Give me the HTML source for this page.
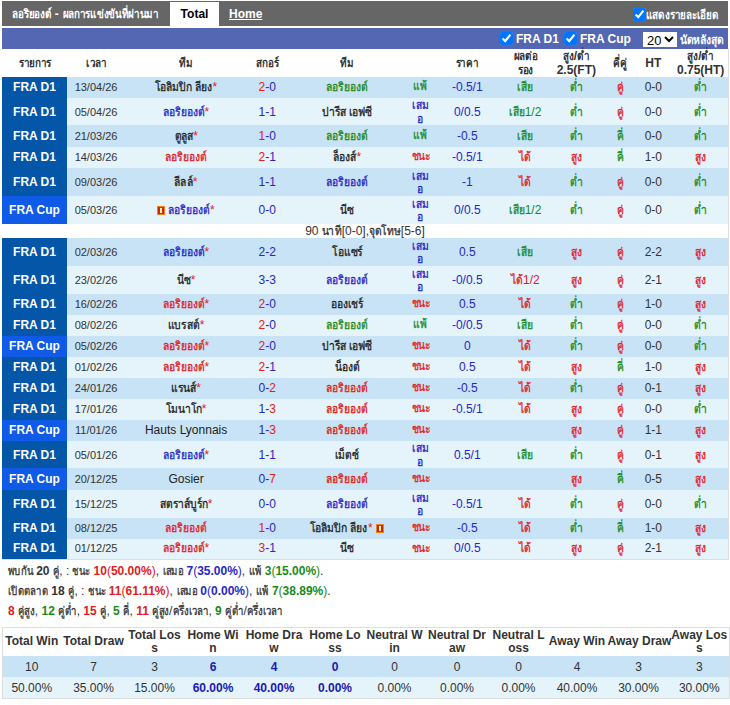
<!DOCTYPE html>
<html><head><meta charset="utf-8">
<style>
*{box-sizing:border-box}
html,body{margin:0;padding:0;background:#fff;width:730px;height:705px;overflow:hidden}
body{font-family:"Liberation Sans",sans-serif;font-size:12px;color:#333;position:relative}
#top{position:absolute;left:2px;top:1px;width:726px;height:25px;background:#666}
#top .ttl{position:absolute;left:10px;top:3px;color:#fff;font-weight:bold;font-size:12px}
#top .tab{position:absolute;left:168px;top:1px;width:49px;height:24px;background:#fff;color:#000;font-weight:bold;font-size:12px;text-align:center;line-height:24px}
#top .home{position:absolute;left:227px;top:6px;color:#fff;font-weight:bold;font-size:12px;text-decoration:underline}
#top .det{position:absolute;left:631px;top:3.5px;color:#fff;font-weight:bold;font-size:12px;white-space:nowrap}
input[type=checkbox]{margin:0 3px 0 0;width:13px;height:13px;vertical-align:-2px}
#bar{position:absolute;left:2px;top:28px;width:726px;height:21px;background:#5467b2}
#bar .f{position:absolute;top:4px;color:#fff;font-weight:bold;font-size:12px;white-space:nowrap}
#bar .sel{position:absolute;left:641px;top:4px;width:34px;height:15px;font-size:13px;padding:0;margin:0;border:0;border-radius:0;background:#fff;color:#000}
#main{position:absolute;left:2px;top:49px;width:727px;border-collapse:collapse;table-layout:fixed;border-right:1px solid #ddd;border-bottom:1px solid #ddd}
#main td{padding:0;text-align:center;vertical-align:middle;white-space:nowrap;line-height:14px}
#main th{font-weight:bold;color:#333;height:28px;padding:0;line-height:14px}
#main tr.a td{background:#c8e3f5}
#main tr.b td{background:#e5f3fb}
#main td.d1{background:#0457a8 !important;color:#fff;font-weight:bold;font-size:12px}
#main td.cup{background:#0f5ae6 !important;color:#fff;font-weight:bold;font-size:12px}
#main td.dt{font-size:11px;color:#333;padding-left:4px}
#main tr.sub td{background:#fff;text-align:center;color:#333}
#main td.rs{line-height:13.5px}
#main tr.s1 td{padding-bottom:1px}
sup{color:#e02020;font-size:12px;vertical-align:baseline;line-height:0}
.rc{display:inline-block;width:8px;height:9px;background:linear-gradient(90deg,#c82000,#e03000 50%,#c82000);border:1px solid #f08020;vertical-align:-1px;position:relative}
.rc:after{content:"";position:absolute;left:2px;top:1px;width:2px;height:5px;background:#fff8c0}
.t{display:inline-block;transform:scaleX(.86);-webkit-text-stroke:0.3px currentColor}
th .t,#top .t,#bar .t{transform:scaleX(.82);-webkit-text-stroke:0}
#sum .l{position:absolute;left:8px;color:#333;font-size:12px;white-space:nowrap;line-height:14px;word-spacing:0px}
#sum .r{color:#e02020}#sum .u{color:#2727c8}#sum .g{color:#1a8a1a}
#st{position:absolute;left:2px;top:627px;width:727px;border-collapse:collapse;table-layout:fixed;border:1px solid #ddd}
#st td{text-align:center;padding:0;font-size:12px;color:#333;line-height:13px;white-space:nowrap}
#st tr.h td{font-weight:bold;height:28px;background:#fff;color:#333}
#st tr.a td{background:#c8e3f5;height:21px;padding-top:2px}
#st tr.b td{background:#e5f3fb;height:22px;padding-top:2px}
#st td.hb{color:#1a1ab4;font-weight:bold}
#bar .nl .t{transform:scaleX(.86)}
#sum .t{transform:scaleX(.8)}
</style></head><body>
<div id="top">
 <div class="ttl"><span class="t" style="margin:0 -4.32px">ลอริยองต์</span> - <span class="t" style="margin:0 -10.53px">ผลการแข่งขันที่ผ่านมา</span></div>
 <div class="tab">Total</div>
 <div class="home">Home</div>
 <div class="det"><input type="checkbox" checked style="margin-right:0"><span class="t" style="margin:0 -7.92px">แสดงรายละเอียด</span></div>
</div>
<div id="bar">
 <div class="f" style="left:498px"><input type="checkbox" checked>FRA D1</div>
 <div class="f" style="left:562px"><input type="checkbox" checked>FRA Cup</div>
 <select class="sel"><option>20</option></select>
 <div class="f nl" style="left:678px;top:2px"><span class="t" style="margin:0 -3.64px">นัดหลังสุด</span></div>
</div>
<table id="main">
<colgroup><col style="width:65px"><col style="width:54px"><col style="width:130px"><col style="width:32px"><col style="width:128px"><col style="width:18px"><col style="width:76px"><col style="width:40px"><col style="width:62px"><col style="width:26px"><col style="width:40px"><col style="width:55px"></colgroup>
<tr><th><span class="t" style="margin:0 -3.60px">รายการ</span></th><th style="padding-left:5px"><span class="t" style="margin:0 -2.25px">เวลา</span></th><th><span class="t" style="margin:0 -1.44px">ทีม</span></th><th><span class="t" style="margin:0 -2.43px">สกอร์</span></th><th><span class="t" style="margin:0 -1.44px">ทีม</span></th><th></th><th><span class="t" style="margin:0 -2.52px">ราคา</span></th><th><span class="t" style="margin:0 -2.61px">ผลต่อ</span><br><span class="t" style="margin:0 -1.71px">รอง</span></th><th><span class="t" style="margin:0 -1.17px">สูง</span>/<span class="t" style="margin:0 -1.35px">ต่ำ</span><br>2.5(FT)</th><th><span class="t" style="margin:0 -1.44px">คี่คู่</span></th><th>HT</th><th><span class="t" style="margin:0 -1.17px">สูง</span>/<span class="t" style="margin:0 -1.35px">ต่ำ</span><br>0.75(HT)</th></tr>
<tr class="a s1" style="height:21px"><td class="d1">FRA D1</td><td class="dt">13/04/26</td><td><span style="color:#222"><span class="t" style="margin:0 -3.01px">โอลิมปิก</span> <span class="t" style="margin:0 -1.40px">ลียง</span></span><sup>*</sup></td><td><span style="color:#e02020">2</span><span style="color:#2727c8">-</span><span style="color:#2727c8">0</span></td><td><span style="color:#1a8a1a"><span class="t" style="margin:0 -3.36px">ลอริยองต์</span></span></td><td class="rs"><span style="color:#1a8a1a"><span class="t" style="margin:0 -1.12px">แพ้</span></span></td><td style="color:#2727c8">-0.5/1</td><td style="color:#1a8a1a"><span class="t" style="margin:0 -1.26px">เสีย</span></td><td style="color:#1a8a1a"><span class="t" style="margin:0 -1.05px">ต่ำ</span></td><td style="color:#e02020"><span class="t" style="margin:0 -0.56px">คู่</span></td><td class="ht">0-0</td><td style="color:#1a8a1a"><span class="t" style="margin:0 -1.05px">ต่ำ</span></td></tr>
<tr class="b" style="height:27px"><td class="d1">FRA D1</td><td class="dt">05/04/26</td><td><span style="color:#2727c8"><span class="t" style="margin:0 -3.36px">ลอริยองต์</span></span><sup>*</sup></td><td><span style="color:#2727c8">1</span><span style="color:#2727c8">-</span><span style="color:#2727c8">1</span></td><td><span style="color:#222"><span class="t" style="margin:0 -1.96px">ปารีส</span> <span class="t" style="margin:0 -1.89px">เอฟซี</span></span></td><td class="rs"><span style="color:#2727c8;position:relative;top:1px;display:inline-block"><span class="t" style="margin:0 -1.33px">เสม</span><br><span class="t" style="margin:0 -0.49px">อ</span></span></td><td style="color:#2727c8">0/0.5</td><td style="color:#1a8a1a"><span class="t" style="margin:0 -1.26px">เสีย</span>1/2</td><td style="color:#1a8a1a"><span class="t" style="margin:0 -1.05px">ต่ำ</span></td><td style="color:#e02020"><span class="t" style="margin:0 -0.56px">คู่</span></td><td class="ht">0-0</td><td style="color:#1a8a1a"><span class="t" style="margin:0 -1.05px">ต่ำ</span></td></tr>
<tr class="a s1" style="height:22px"><td class="d1">FRA D1</td><td class="dt">21/03/26</td><td><span style="color:#222"><span class="t" style="margin:0 -1.54px">ตูลูส</span></span><sup>*</sup></td><td><span style="color:#e02020">1</span><span style="color:#2727c8">-</span><span style="color:#2727c8">0</span></td><td><span style="color:#1a8a1a"><span class="t" style="margin:0 -3.36px">ลอริยองต์</span></span></td><td class="rs"><span style="color:#1a8a1a"><span class="t" style="margin:0 -1.12px">แพ้</span></span></td><td style="color:#2727c8">-0.5</td><td style="color:#1a8a1a"><span class="t" style="margin:0 -1.26px">เสีย</span></td><td style="color:#1a8a1a"><span class="t" style="margin:0 -1.05px">ต่ำ</span></td><td style="color:#1a8a1a"><span class="t" style="margin:0 -0.56px">คี่</span></td><td class="ht">0-0</td><td style="color:#1a8a1a"><span class="t" style="margin:0 -1.05px">ต่ำ</span></td></tr>
<tr class="b s1" style="height:21px"><td class="d1">FRA D1</td><td class="dt">14/03/26</td><td><span style="color:#e02020"><span class="t" style="margin:0 -3.36px">ลอริยองต์</span></span></td><td><span style="color:#e02020">2</span><span style="color:#2727c8">-</span><span style="color:#2727c8">1</span></td><td><span style="color:#222"><span class="t" style="margin:0 -1.89px">ล็องส์</span></span><sup>*</sup></td><td class="rs"><span style="color:#e02020"><span class="t" style="margin:0 -1.54px">ชนะ</span></span></td><td style="color:#2727c8">-0.5/1</td><td style="color:#e02020"><span class="t" style="margin:0 -0.98px">ได้</span></td><td style="color:#e02020"><span class="t" style="margin:0 -0.91px">สูง</span></td><td style="color:#1a8a1a"><span class="t" style="margin:0 -0.56px">คี่</span></td><td class="ht">1-0</td><td style="color:#e02020"><span class="t" style="margin:0 -0.91px">สูง</span></td></tr>
<tr class="a" style="height:28px"><td class="d1">FRA D1</td><td class="dt">09/03/26</td><td><span style="color:#222"><span class="t" style="margin:0 -1.47px">ลีลล์</span></span><sup>*</sup></td><td><span style="color:#2727c8">1</span><span style="color:#2727c8">-</span><span style="color:#2727c8">1</span></td><td><span style="color:#2727c8"><span class="t" style="margin:0 -3.36px">ลอริยองต์</span></span></td><td class="rs"><span style="color:#2727c8;position:relative;top:1px;display:inline-block"><span class="t" style="margin:0 -1.33px">เสม</span><br><span class="t" style="margin:0 -0.49px">อ</span></span></td><td style="color:#2727c8">-1</td><td style="color:#e02020"><span class="t" style="margin:0 -0.98px">ได้</span></td><td style="color:#1a8a1a"><span class="t" style="margin:0 -1.05px">ต่ำ</span></td><td style="color:#e02020"><span class="t" style="margin:0 -0.56px">คู่</span></td><td class="ht">0-0</td><td style="color:#1a8a1a"><span class="t" style="margin:0 -1.05px">ต่ำ</span></td></tr>
<tr class="b" style="height:28px"><td class="cup">FRA Cup</td><td class="dt">05/03/26</td><td><i class="rc"></i> <span style="color:#2727c8"><span class="t" style="margin:0 -3.36px">ลอริยองต์</span></span><sup>*</sup></td><td><span style="color:#2727c8">0</span><span style="color:#2727c8">-</span><span style="color:#2727c8">0</span></td><td><span style="color:#222"><span class="t" style="margin:0 -1.12px">นีซ</span></span></td><td class="rs"><span style="color:#2727c8;position:relative;top:1px;display:inline-block"><span class="t" style="margin:0 -1.33px">เสม</span><br><span class="t" style="margin:0 -0.49px">อ</span></span></td><td style="color:#2727c8">0/0.5</td><td style="color:#1a8a1a"><span class="t" style="margin:0 -1.26px">เสีย</span>1/2</td><td style="color:#1a8a1a"><span class="t" style="margin:0 -1.05px">ต่ำ</span></td><td style="color:#e02020"><span class="t" style="margin:0 -0.56px">คู่</span></td><td class="ht">0-0</td><td style="color:#1a8a1a"><span class="t" style="margin:0 -1.05px">ต่ำ</span></td></tr>
<tr class="sub" style="height:14px"><td colspan="12">90 <span class="t" style="margin:0 -1.61px">นาที</span>[0-0],<span class="t" style="margin:0 -2.59px">จุดโทษ</span>[5-6]</td></tr>
<tr class="a" style="height:28px"><td class="d1">FRA D1</td><td class="dt">02/03/26</td><td><span style="color:#2727c8"><span class="t" style="margin:0 -3.36px">ลอริยองต์</span></span><sup>*</sup></td><td><span style="color:#2727c8">2</span><span style="color:#2727c8">-</span><span style="color:#2727c8">2</span></td><td><span style="color:#222"><span class="t" style="margin:0 -2.45px">โอแซร์</span></span></td><td class="rs"><span style="color:#2727c8;position:relative;top:1px;display:inline-block"><span class="t" style="margin:0 -1.33px">เสม</span><br><span class="t" style="margin:0 -0.49px">อ</span></span></td><td style="color:#2727c8">0.5</td><td style="color:#1a8a1a"><span class="t" style="margin:0 -1.26px">เสีย</span></td><td style="color:#e02020"><span class="t" style="margin:0 -0.91px">สูง</span></td><td style="color:#e02020"><span class="t" style="margin:0 -0.56px">คู่</span></td><td class="ht">2-2</td><td style="color:#e02020"><span class="t" style="margin:0 -0.91px">สูง</span></td></tr>
<tr class="b" style="height:28px"><td class="d1">FRA D1</td><td class="dt">23/02/26</td><td><span style="color:#222"><span class="t" style="margin:0 -1.12px">นีซ</span></span><sup>*</sup></td><td><span style="color:#2727c8">3</span><span style="color:#2727c8">-</span><span style="color:#2727c8">3</span></td><td><span style="color:#2727c8"><span class="t" style="margin:0 -3.36px">ลอริยองต์</span></span></td><td class="rs"><span style="color:#2727c8;position:relative;top:1px;display:inline-block"><span class="t" style="margin:0 -1.33px">เสม</span><br><span class="t" style="margin:0 -0.49px">อ</span></span></td><td style="color:#2727c8">-0/0.5</td><td style="color:#e02020"><span class="t" style="margin:0 -0.98px">ได้</span>1/2</td><td style="color:#e02020"><span class="t" style="margin:0 -0.91px">สูง</span></td><td style="color:#e02020"><span class="t" style="margin:0 -0.56px">คู่</span></td><td class="ht">2-1</td><td style="color:#e02020"><span class="t" style="margin:0 -0.91px">สูง</span></td></tr>
<tr class="a s1" style="height:21px"><td class="d1">FRA D1</td><td class="dt">16/02/26</td><td><span style="color:#e02020"><span class="t" style="margin:0 -3.36px">ลอริยองต์</span></span><sup>*</sup></td><td><span style="color:#e02020">2</span><span style="color:#2727c8">-</span><span style="color:#2727c8">0</span></td><td><span style="color:#222"><span class="t" style="margin:0 -2.66px">อองเชร์</span></span></td><td class="rs"><span style="color:#e02020"><span class="t" style="margin:0 -1.54px">ชนะ</span></span></td><td style="color:#2727c8">0.5</td><td style="color:#e02020"><span class="t" style="margin:0 -0.98px">ได้</span></td><td style="color:#1a8a1a"><span class="t" style="margin:0 -1.05px">ต่ำ</span></td><td style="color:#e02020"><span class="t" style="margin:0 -0.56px">คู่</span></td><td class="ht">1-0</td><td style="color:#e02020"><span class="t" style="margin:0 -0.91px">สูง</span></td></tr>
<tr class="b s1" style="height:21px"><td class="d1">FRA D1</td><td class="dt">08/02/26</td><td><span style="color:#222"><span class="t" style="margin:0 -2.59px">แบรสต์</span></span><sup>*</sup></td><td><span style="color:#e02020">2</span><span style="color:#2727c8">-</span><span style="color:#2727c8">0</span></td><td><span style="color:#1a8a1a"><span class="t" style="margin:0 -3.36px">ลอริยองต์</span></span></td><td class="rs"><span style="color:#1a8a1a"><span class="t" style="margin:0 -1.12px">แพ้</span></span></td><td style="color:#2727c8">-0/0.5</td><td style="color:#1a8a1a"><span class="t" style="margin:0 -1.26px">เสีย</span></td><td style="color:#1a8a1a"><span class="t" style="margin:0 -1.05px">ต่ำ</span></td><td style="color:#e02020"><span class="t" style="margin:0 -0.56px">คู่</span></td><td class="ht">0-0</td><td style="color:#1a8a1a"><span class="t" style="margin:0 -1.05px">ต่ำ</span></td></tr>
<tr class="a s1" style="height:21px"><td class="cup">FRA Cup</td><td class="dt">05/02/26</td><td><span style="color:#e02020"><span class="t" style="margin:0 -3.36px">ลอริยองต์</span></span><sup>*</sup></td><td><span style="color:#e02020">2</span><span style="color:#2727c8">-</span><span style="color:#2727c8">0</span></td><td><span style="color:#222"><span class="t" style="margin:0 -1.96px">ปารีส</span> <span class="t" style="margin:0 -1.89px">เอฟซี</span></span></td><td class="rs"><span style="color:#e02020"><span class="t" style="margin:0 -1.54px">ชนะ</span></span></td><td style="color:#2727c8">0</td><td style="color:#e02020"><span class="t" style="margin:0 -0.98px">ได้</span></td><td style="color:#1a8a1a"><span class="t" style="margin:0 -1.05px">ต่ำ</span></td><td style="color:#e02020"><span class="t" style="margin:0 -0.56px">คู่</span></td><td class="ht">0-0</td><td style="color:#1a8a1a"><span class="t" style="margin:0 -1.05px">ต่ำ</span></td></tr>
<tr class="b s1" style="height:21px"><td class="d1">FRA D1</td><td class="dt">01/02/26</td><td><span style="color:#e02020"><span class="t" style="margin:0 -3.36px">ลอริยองต์</span></span><sup>*</sup></td><td><span style="color:#e02020">2</span><span style="color:#2727c8">-</span><span style="color:#2727c8">1</span></td><td><span style="color:#222"><span class="t" style="margin:0 -2.03px">น็องต์</span></span></td><td class="rs"><span style="color:#e02020"><span class="t" style="margin:0 -1.54px">ชนะ</span></span></td><td style="color:#2727c8">0.5</td><td style="color:#e02020"><span class="t" style="margin:0 -0.98px">ได้</span></td><td style="color:#e02020"><span class="t" style="margin:0 -0.91px">สูง</span></td><td style="color:#1a8a1a"><span class="t" style="margin:0 -0.56px">คี่</span></td><td class="ht">1-0</td><td style="color:#e02020"><span class="t" style="margin:0 -0.91px">สูง</span></td></tr>
<tr class="a s1" style="height:21px"><td class="d1">FRA D1</td><td class="dt">24/01/26</td><td><span style="color:#222"><span class="t" style="margin:0 -2.03px">แรนส์</span></span><sup>*</sup></td><td><span style="color:#2727c8">0</span><span style="color:#2727c8">-</span><span style="color:#e02020">2</span></td><td><span style="color:#e02020"><span class="t" style="margin:0 -3.36px">ลอริยองต์</span></span></td><td class="rs"><span style="color:#e02020"><span class="t" style="margin:0 -1.54px">ชนะ</span></span></td><td style="color:#2727c8">-0.5</td><td style="color:#e02020"><span class="t" style="margin:0 -0.98px">ได้</span></td><td style="color:#1a8a1a"><span class="t" style="margin:0 -1.05px">ต่ำ</span></td><td style="color:#e02020"><span class="t" style="margin:0 -0.56px">คู่</span></td><td class="ht">0-1</td><td style="color:#e02020"><span class="t" style="margin:0 -0.91px">สูง</span></td></tr>
<tr class="b s1" style="height:21px"><td class="d1">FRA D1</td><td class="dt">17/01/26</td><td><span style="color:#222"><span class="t" style="margin:0 -2.94px">โมนาโก</span></span><sup>*</sup></td><td><span style="color:#2727c8">1</span><span style="color:#2727c8">-</span><span style="color:#e02020">3</span></td><td><span style="color:#e02020"><span class="t" style="margin:0 -3.36px">ลอริยองต์</span></span></td><td class="rs"><span style="color:#e02020"><span class="t" style="margin:0 -1.54px">ชนะ</span></span></td><td style="color:#2727c8">-0.5/1</td><td style="color:#e02020"><span class="t" style="margin:0 -0.98px">ได้</span></td><td style="color:#e02020"><span class="t" style="margin:0 -0.91px">สูง</span></td><td style="color:#e02020"><span class="t" style="margin:0 -0.56px">คู่</span></td><td class="ht">0-0</td><td style="color:#1a8a1a"><span class="t" style="margin:0 -1.05px">ต่ำ</span></td></tr>
<tr class="a s1" style="height:21px"><td class="cup">FRA Cup</td><td class="dt">11/01/26</td><td><span style="color:#222">Hauts Lyonnais</span></td><td><span style="color:#2727c8">1</span><span style="color:#2727c8">-</span><span style="color:#e02020">3</span></td><td><span style="color:#e02020"><span class="t" style="margin:0 -3.36px">ลอริยองต์</span></span></td><td class="rs"><span style="color:#e02020"><span class="t" style="margin:0 -1.54px">ชนะ</span></span></td><td style="color:#2727c8"></td><td style="color:#2727c8"></td><td style="color:#e02020"><span class="t" style="margin:0 -0.91px">สูง</span></td><td style="color:#e02020"><span class="t" style="margin:0 -0.56px">คู่</span></td><td class="ht">1-1</td><td style="color:#e02020"><span class="t" style="margin:0 -0.91px">สูง</span></td></tr>
<tr class="b" style="height:27px"><td class="d1">FRA D1</td><td class="dt">05/01/26</td><td><span style="color:#2727c8"><span class="t" style="margin:0 -3.36px">ลอริยองต์</span></span><sup>*</sup></td><td><span style="color:#2727c8">1</span><span style="color:#2727c8">-</span><span style="color:#2727c8">1</span></td><td><span style="color:#222"><span class="t" style="margin:0 -1.96px">เม็ตซ์</span></span></td><td class="rs"><span style="color:#2727c8;position:relative;top:1px;display:inline-block"><span class="t" style="margin:0 -1.33px">เสม</span><br><span class="t" style="margin:0 -0.49px">อ</span></span></td><td style="color:#2727c8">0.5/1</td><td style="color:#1a8a1a"><span class="t" style="margin:0 -1.26px">เสีย</span></td><td style="color:#1a8a1a"><span class="t" style="margin:0 -1.05px">ต่ำ</span></td><td style="color:#e02020"><span class="t" style="margin:0 -0.56px">คู่</span></td><td class="ht">0-1</td><td style="color:#e02020"><span class="t" style="margin:0 -0.91px">สูง</span></td></tr>
<tr class="a s1" style="height:22px"><td class="cup">FRA Cup</td><td class="dt">20/12/25</td><td><span style="color:#222">Gosier</span></td><td><span style="color:#2727c8">0</span><span style="color:#2727c8">-</span><span style="color:#e02020">7</span></td><td><span style="color:#e02020"><span class="t" style="margin:0 -3.36px">ลอริยองต์</span></span></td><td class="rs"><span style="color:#e02020"><span class="t" style="margin:0 -1.54px">ชนะ</span></span></td><td style="color:#2727c8"></td><td style="color:#2727c8"></td><td style="color:#e02020"><span class="t" style="margin:0 -0.91px">สูง</span></td><td style="color:#1a8a1a"><span class="t" style="margin:0 -0.56px">คี่</span></td><td class="ht">0-5</td><td style="color:#e02020"><span class="t" style="margin:0 -0.91px">สูง</span></td></tr>
<tr class="b" style="height:28px"><td class="d1">FRA D1</td><td class="dt">15/12/25</td><td><span style="color:#222"><span class="t" style="margin:0 -3.92px">สตราส์บูร์ก</span></span><sup>*</sup></td><td><span style="color:#2727c8">0</span><span style="color:#2727c8">-</span><span style="color:#2727c8">0</span></td><td><span style="color:#2727c8"><span class="t" style="margin:0 -3.36px">ลอริยองต์</span></span></td><td class="rs"><span style="color:#2727c8;position:relative;top:1px;display:inline-block"><span class="t" style="margin:0 -1.33px">เสม</span><br><span class="t" style="margin:0 -0.49px">อ</span></span></td><td style="color:#2727c8">-0.5/1</td><td style="color:#e02020"><span class="t" style="margin:0 -0.98px">ได้</span></td><td style="color:#1a8a1a"><span class="t" style="margin:0 -1.05px">ต่ำ</span></td><td style="color:#e02020"><span class="t" style="margin:0 -0.56px">คู่</span></td><td class="ht">0-0</td><td style="color:#1a8a1a"><span class="t" style="margin:0 -1.05px">ต่ำ</span></td></tr>
<tr class="a s1" style="height:21px"><td class="d1">FRA D1</td><td class="dt">08/12/25</td><td><span style="color:#e02020"><span class="t" style="margin:0 -3.36px">ลอริยองต์</span></span></td><td><span style="color:#e02020">1</span><span style="color:#2727c8">-</span><span style="color:#2727c8">0</span></td><td><span style="color:#222"><span class="t" style="margin:0 -3.01px">โอลิมปิก</span> <span class="t" style="margin:0 -1.40px">ลียง</span></span><sup>*</sup> <i class="rc"></i></td><td class="rs"><span style="color:#e02020"><span class="t" style="margin:0 -1.54px">ชนะ</span></span></td><td style="color:#2727c8">-0.5</td><td style="color:#e02020"><span class="t" style="margin:0 -0.98px">ได้</span></td><td style="color:#1a8a1a"><span class="t" style="margin:0 -1.05px">ต่ำ</span></td><td style="color:#1a8a1a"><span class="t" style="margin:0 -0.56px">คี่</span></td><td class="ht">1-0</td><td style="color:#e02020"><span class="t" style="margin:0 -0.91px">สูง</span></td></tr>
<tr class="b s1" style="height:20px"><td class="d1">FRA D1</td><td class="dt">01/12/25</td><td><span style="color:#e02020"><span class="t" style="margin:0 -3.36px">ลอริยองต์</span></span><sup>*</sup></td><td><span style="color:#e02020">3</span><span style="color:#2727c8">-</span><span style="color:#2727c8">1</span></td><td><span style="color:#222"><span class="t" style="margin:0 -1.12px">นีซ</span></span></td><td class="rs"><span style="color:#e02020"><span class="t" style="margin:0 -1.54px">ชนะ</span></span></td><td style="color:#2727c8">0/0.5</td><td style="color:#e02020"><span class="t" style="margin:0 -0.98px">ได้</span></td><td style="color:#e02020"><span class="t" style="margin:0 -0.91px">สูง</span></td><td style="color:#e02020"><span class="t" style="margin:0 -0.56px">คู่</span></td><td class="ht">2-1</td><td style="color:#e02020"><span class="t" style="margin:0 -0.91px">สูง</span></td></tr>
</table>
<div id="sum">
<div class="l" style="top:564px"><span class="t" style="margin:0 -3.10px">พบกัน</span> <b>20</b> <span class="t" style="margin:0 -0.80px">คู่</span>, : <span class="t" style="margin:0 -2.20px">ชนะ</span> <b class="r">10</b><span class="r">(<b>50.00%</b>)</span>, <span class="t" style="margin:0 -2.60px">เสมอ</span> <b class="u">7</b><span class="u">(<b>35.00%</b>)</span>, <span class="t" style="margin:0 -1.60px">แพ้</span> <b class="g">3</b><span class="g">(<b>15.00%</b>)</span>.</div>
<div class="l" style="top:584px"><span class="t" style="margin:0 -5.00px">เปิดตลาด</span> <b>18</b> <span class="t" style="margin:0 -0.80px">คู่</span>, : <span class="t" style="margin:0 -2.20px">ชนะ</span> <b class="r">11</b><span class="r">(<b>61.11%</b>)</span>, <span class="t" style="margin:0 -2.60px">เสมอ</span> <b class="u">0</b><span class="u">(<b>0.00%</b>)</span>, <span class="t" style="margin:0 -1.60px">แพ้</span> <b class="g">7</b><span class="g">(<b>38.89%</b>)</span>.</div>
<div class="l" style="top:604px"><b class="r">8</b> <span class="t" style="margin:0 -2.10px">คู่สูง</span>, <b class="g">12</b> <span class="t" style="margin:0 -2.30px">คู่ต่ำ</span>, <b class="r">15</b> <span class="t" style="margin:0 -0.80px">คู่</span>, <b class="g">5</b> <span class="t" style="margin:0 -0.80px">คี่</span>, <b class="r">11</b> <span class="t" style="margin:0 -2.10px">คู่สูง</span>/<span class="t" style="margin:0 -4.50px">ครึ่งเวลา</span>, <b class="g">9</b> <span class="t" style="margin:0 -2.30px">คู่ต่ำ</span>/<span class="t" style="margin:0 -4.50px">ครึ่งเวลา</span></div>
</div>
<table id="st">
<colgroup><col style="width:58px"><col style="width:66px"><col style="width:56px"><col style="width:61px"><col style="width:61px"><col style="width:61px"><col style="width:58px"><col style="width:67px"><col style="width:56px"><col style="width:61px"><col style="width:62px"><col style="width:60px"></colgroup>
<tr class="h"><td>Total Win</td><td>Total Draw</td><td>Total Los<br>s</td><td>Home Wi<br>n</td><td>Home Dra<br>w</td><td>Home Lo<br>ss</td><td>Neutral W<br>in</td><td>Neutral Dr<br>aw</td><td>Neutral L<br>oss</td><td>Away Win</td><td>Away Draw</td><td>Away Los<br>s</td></tr>
<tr class="a"><td>10</td><td>7</td><td>3</td><td class="hb">6</td><td class="hb">4</td><td class="hb">0</td><td>0</td><td>0</td><td>0</td><td>4</td><td>3</td><td>3</td></tr>
<tr class="b"><td>50.00%</td><td>35.00%</td><td>15.00%</td><td class="hb">60.00%</td><td class="hb">40.00%</td><td class="hb">0.00%</td><td>0.00%</td><td>0.00%</td><td>0.00%</td><td>40.00%</td><td>30.00%</td><td>30.00%</td></tr>
</table>
</body></html>
